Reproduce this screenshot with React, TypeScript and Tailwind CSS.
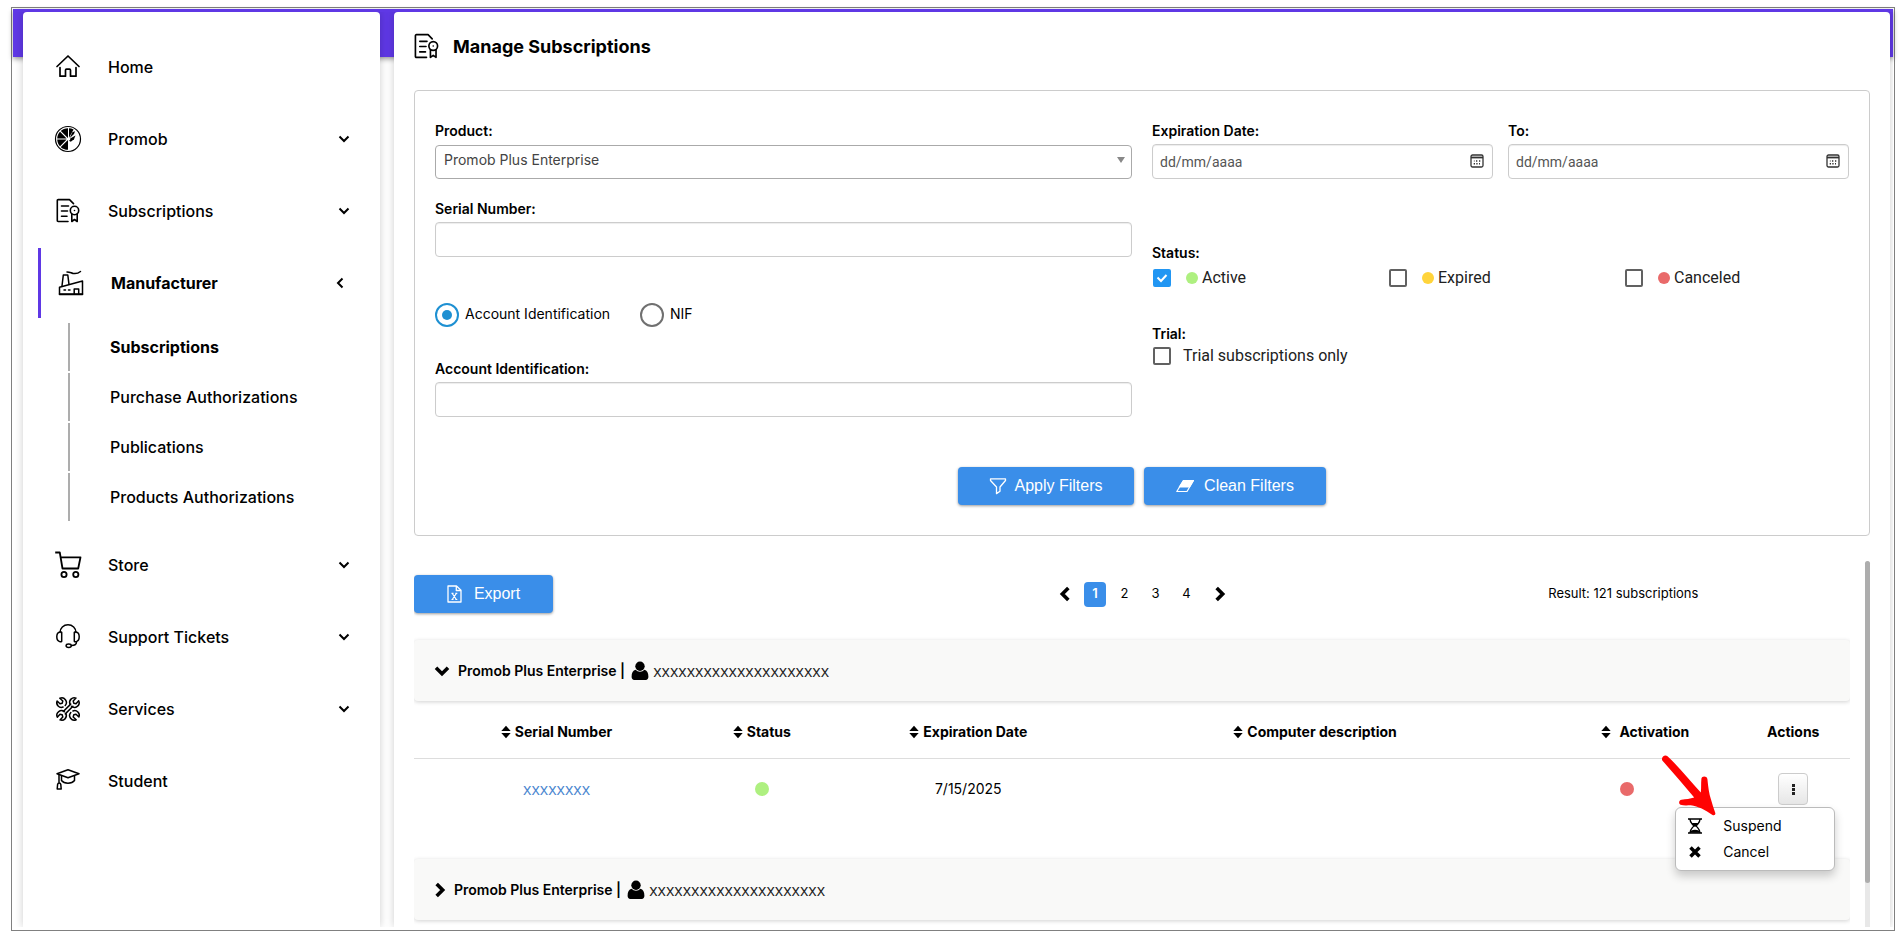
import React, { useState } from "react";

type IconProps = { className?: string };

function HomeIcon() {
  return (
    <svg viewBox="0 0 28 28" className="size-7" fill="none" stroke="currentColor" strokeWidth="1.7" strokeLinecap="round" strokeLinejoin="round">
      <path d="M3 13.500 14 3 25 13.500" />
      <path d="M6 14.500v8.700h5.500v-6a1 1 0 0 1 1-1h3a1 1 0 0 1 1 1v6H22v-8.700" />
    </svg>
  );
}

function WheelIcon() {
  return (
    <svg viewBox="0 0 28 28" className="size-7" fill="none" stroke="currentColor">
      <circle cx="14" cy="14" r="12.500" strokeWidth="1.2" />
      <path d="M14 3.200A10.800 10.800 0 0 0 14 24.800z" fill="currentColor" stroke="none" />
      <path d="M15 12.800V3.300a10.800 10.800 0 0 1 4.600 1.200z" fill="currentColor" stroke="none" />
      <path d="M15.600 13.200 18.300 7.300 21 6.200 20 9z" fill="currentColor" stroke="none" />
      <path d="M16.200 13.600 21.500 10.600 20 14.200l-3.200 2.600-2-1z" fill="currentColor" stroke="none" />
      <path d="M3 14h11M6.200 6.200 14 14M6.200 21.800 14 14" stroke="white" strokeWidth="1.100" />
      <circle cx="14.800" cy="14" r="1.500" fill="white" stroke="none" />
    </svg>
  );
}

function CertificateIcon({ className = "size-7" }: IconProps) {
  return (
    <svg viewBox="0 0 28 28" className={className} fill="none" stroke="currentColor" strokeWidth="1.6" strokeLinecap="round" strokeLinejoin="round">
      <path d="M14 24.500H4.200a.9.900 0 0 1-.9-.9V3.500a.9.900 0 0 1 .9-.9H15.500l4 4" />
      <path d="M7.500 9h7M7.500 14h6M7.500 19.200h5.500" />
      <circle cx="20.500" cy="13.500" r="4.200" />
      <circle cx="20.500" cy="13.500" r=".8" fill="currentColor" stroke="none" />
      <path d="M17.800 17v7.500l2.700-2 2.700 2V17" />
    </svg>
  );
}

function FactoryIcon() {
  return (
    <svg viewBox="0 0 28 28" className="size-7" fill="none" stroke="currentColor" strokeWidth="1.5" strokeLinecap="round" strokeLinejoin="round">
      <path d="M3.500 25.500V18.200L26.500 12v13.500z" />
      <path d="M6 17 7.300 6h4.500l1.200 9.300" />
      <path d="M11 3c3 0 4 1 6 1.400S22 4.600 24.500 2.500" />
      <path d="M18.200 25v-5h4.500v5" />
      <path d="M8 21h1.500M12.500 21H14" />
      <path d="M3.500 25h23" />
    </svg>
  );
}

function CartIcon() {
  return (
    <svg viewBox="0 0 28 28" className="size-7" fill="none" stroke="currentColor" strokeWidth="1.8" strokeLinejoin="round">
      <path d="M1.200 1.500h4.600L8.500 17.500h15.700L26.500 6.300H6.600" />
      <circle cx="10" cy="23.500" r="2.600" />
      <circle cx="21.800" cy="23.500" r="2.600" />
    </svg>
  );
}

function HeadsetIcon() {
  return (
    <svg viewBox="0 0 28 28" className="size-7" fill="none" stroke="currentColor" strokeWidth="1.5" strokeLinecap="round" strokeLinejoin="round">
      <path d="M6 9.500a8 7.800 0 0 1 16 0" />
      <path d="M7.700 9.300v9a2 2 0 0 1-2 .3c-1.500-.4-2.900-1.700-2.900-4.800s1.400-4.400 2.900-4.800a2 2 0 0 1 2 .3z" />
      <path d="M20.300 9.300v9a2 2 0 0 0 2 .3c1.500-.4 2.900-1.700 2.900-4.800s-1.400-4.400-2.900-4.800a2 2 0 0 0-2 .3z" />
      <path d="M22.500 19c0 2.500-1.500 3.500-5 3.500" />
      <ellipse cx="14.700" cy="22.700" rx="2.600" ry="1.700" />
    </svg>
  );
}

function ToolsIcon() {
  const head = "M11.200 10.500a4.600 4.600 0 0 0-5.400-7.200l3 2.700-.6 2.200-2.200.6-2.900-2.800a4.600 4.600 0 0 0 6 6";
  return (
    <svg viewBox="0 0 28 28" className="size-7" fill="none" stroke="currentColor" strokeWidth="1.5" strokeLinecap="round" strokeLinejoin="round">
      <path d={head} />
      <path d={head} transform="rotate(90 14 14)" />
      <path d={head} transform="rotate(180 14 14)" />
      <path d={head} transform="rotate(270 14 14)" />
      <path d="M9.300 16.500 16.700 9.100M11.300 18.900l7.600-7.600" />
    </svg>
  );
}

function GraduateIcon() {
  return (
    <svg viewBox="0 0 28 28" className="size-7" fill="none" stroke="currentColor" strokeWidth="1.5" strokeLinecap="round" strokeLinejoin="round">
      <path d="M14 2.800 25 6.800 14 10.800 3 6.800z" />
      <path d="M7.500 9v4.500c1.500 2 4 2.700 6.500 2.700s5-.7 6.500-2.700V9" />
      <path d="M5 8v8M3.200 22l.4-4.500c.2-1 .8-1.400 1.500-1.400s1.500.4 1.700 1.400l.4 4.500z" />
    </svg>
  );
}

function Chevron({ direction, className = "size-3", weight = 2 }: { direction: "down" | "left" | "right"; className?: string; weight?: number }) {
  const paths = { down: "M1.500 3.500 6 8l4.500-4.500", left: "M8.500 1.500 4 6l4.500 4.500", right: "M3.500 1.500 8 6l-4.500 4.500" };
  return (
    <svg viewBox="0 0 12 12" className={className} fill="none" stroke="currentColor" strokeWidth={weight}>
      <path d={paths[direction]} />
    </svg>
  );
}

function FunnelIcon() {
  return (
    <svg viewBox="0 0 18 18" className="size-[18px]" fill="none" stroke="currentColor" strokeWidth="1.300" strokeLinejoin="round">
      <path d="M1.500 1.800h15v1.700L11 10v4.300L7.500 16.600V10L1.500 3.500z" />
    </svg>
  );
}

function EraserIcon() {
  return (
    <svg viewBox="0 0 18 18" className="size-[18px]" fill="none" stroke="currentColor" strokeWidth="1.200" strokeLinejoin="round">
      <path d="M7.500 3.500h9.900L11 14.500H.8z" />
      <path d="M7.500 3.500h9.900L13.500 10H3.300z" fill="currentColor" />
    </svg>
  );
}

function SheetIcon() {
  return (
    <svg viewBox="0 0 15 18" className="h-[18px] w-[15px]" fill="none" stroke="currentColor" strokeWidth="1.300" strokeLinejoin="round">
      <path d="M1 1h8.500L14 5.200V17H1z" />
      <path d="M9.300 1v4.500H14" />
      <path d="M5.300 8.500l4 6M9.300 8.500l-4 6M4.500 8.300h2M8.300 8.300h2M4.500 14.500h2M8.300 14.500h2" strokeWidth="1.200" />
    </svg>
  );
}

function CalendarIcon() {
  return (
    <svg viewBox="0 0 14 14" className="size-3.5" fill="none" stroke="#333" strokeWidth="1.300">
      <rect x="1" y="1" width="12" height="12" rx="1.500" />
      <path d="M1 3.500h12" strokeWidth="1.800" />
      <path d="M6 7h1.300M9 7h1.300M3.700 9.700H5M6.300 9.700h1.300M3.900 7h.6M9 9.700h1" strokeWidth="1.500" />
    </svg>
  );
}

function UserIcon() {
  return (
    <svg viewBox="0 0 18 20" className="h-5 w-[18px]" fill="currentColor">
      <circle cx="9" cy="5.200" r="4.700" />
      <path d="M4.600 8.800C2 9.200.6 11.800.6 15.800c0 1.900 1 3.200 2.700 3.200h11.400c1.700 0 2.700-1.300 2.700-3.200 0-4-1.400-6.600-4-7a6 6 0 0 1-8.800 0z" />
    </svg>
  );
}

function SortIcon() {
  return (
    <svg viewBox="0 0 10 14" className="h-3.5 w-2.5" fill="currentColor">
      <path d="M5 .8 9.700 6H.3zM.3 8h9.400L5 13.200z" />
    </svg>
  );
}

function HourglassIcon() {
  return (
    <svg viewBox="0 0 14 16" className="h-4 w-3.5" fill="none" stroke="currentColor" strokeWidth="1.400">
      <path d="M0 1h14M0 15h14" />
      <path d="M2 1c0 4 2.500 5 3.700 7C4.500 10 2 11 2 15M12 1c0 4-2.500 5-3.700 7 1.200 2 3.700 3 3.700 7" />
      <path d="M3.500 5h7L7.700 8.500 7 9l-.7-.5zM2 14.800c.3-2 2-3 5-3s4.700 1 5 3z" fill="currentColor" stroke="none" />
    </svg>
  );
}

function CrossIcon() {
  return (
    <svg viewBox="0 0 12 12" className="size-3" fill="none" stroke="currentColor" strokeWidth="3.500">
      <path d="M1.500 1.500l9 9M10.500 1.500l-9 9" />
    </svg>
  );
}

const topItems = [
  { label: "Home", icon: <HomeIcon />, expandable: false },
  { label: "Promob", icon: <WheelIcon />, expandable: true },
  { label: "Subscriptions", icon: <CertificateIcon />, expandable: true },
];
const bottomItems = [
  { label: "Store", icon: <CartIcon />, expandable: true },
  { label: "Support Tickets", icon: <HeadsetIcon />, expandable: true },
  { label: "Services", icon: <ToolsIcon />, expandable: true },
  { label: "Student", icon: <GraduateIcon />, expandable: false },
];
const subItems = ["Subscriptions", "Purchase Authorizations", "Publications", "Products Authorizations"];

function NavItem({ label, icon, expandable }: { label: string; icon: React.ReactNode; expandable: boolean }) {
  return (
    <a href="#" className="flex h-[72px] items-center pr-[30px] pl-[31px] text-base font-medium">
      {icon}
      <span className="ml-[26px] flex-1">{label}</span>
      {expandable && <Chevron direction="down" />}
    </a>
  );
}

function Sidebar() {
  return (
    <nav className="w-[357px] shrink-0 rounded-t bg-white pt-[19px] shadow-[0_0_8px_rgba(0,0,0,0.2)]">
      {topItems.map((item) => (
        <NavItem key={item.label} {...item} />
      ))}
      <a href="#" className="mt-px ml-[15px] flex h-[70px] items-center border-l-3 border-[#5f38e5] pr-[34px] pl-[15px] text-base font-bold">
        <FactoryIcon />
        <span className="ml-[27px] flex-1">Manufacturer</span>
        <Chevron direction="left" />
      </a>
      <ul className="mt-[5px] mb-2 ml-[45px] flex flex-col gap-0.5">
        {subItems.map((item, index) => (
          <li key={item} className="flex h-12 items-center border-l-2 border-[#adadad] pl-10 text-base">
            <a href="#" className={index === 0 ? "font-bold" : "font-medium"}>{item}</a>
          </li>
        ))}
      </ul>
      {bottomItems.map((item) => (
        <NavItem key={item.label} {...item} />
      ))}
    </nav>
  );
}

const labelClass = "block text-sm leading-4 font-semibold";
const inputClass = "h-[35px] w-full rounded border border-[#ccc] bg-white px-[7px] shadow-[inset_0_1px_1px_rgba(0,0,0,0.075)]";
const buttonClass = "flex h-[38px] items-center justify-center rounded bg-[#3a8ee9] font-['Liberation_Sans',sans-serif] text-base text-white shadow-[0_1px_3px_rgba(0,0,0,0.4)]";

function DateField({ id, label }: { id: string; label: string }) {
  return (
    <div>
      <label htmlFor={id} className={labelClass}>{label}</label>
      <div className="relative mt-[5px]">
        <input id={id} type="text" placeholder="dd/mm/aaaa" className={`${inputClass} font-[Roboto,sans-serif] text-sm placeholder:text-[#555]`} />
        <button type="button" aria-label="Open calendar" className="absolute top-2.5 right-[9px]">
          <CalendarIcon />
        </button>
      </div>
    </div>
  );
}

function CheckOption({ label, dot, initial = false }: { label: string; dot?: string; initial?: boolean }) {
  const [checked, setChecked] = useState(initial);
  return (
    <label className="flex items-center font-[Roboto,sans-serif] text-base leading-5 text-[#212121]">
      <span className="grid size-[18px]">
        <input
          type="checkbox"
          checked={checked}
          onChange={() => setChecked(!checked)}
          className="col-start-1 row-start-1 size-[18px] appearance-none rounded-xs border-2 border-[#616161] bg-white checked:border-[#2196f3] checked:bg-[#2196f3]"
        />
        {checked && (
          <svg viewBox="0 0 18 18" className="pointer-events-none col-start-1 row-start-1 size-[18px]" fill="none" stroke="white" strokeWidth="2">
            <path d="M4.500 8.500 8 12l5.500-6" />
          </svg>
        )}
      </span>
      {dot && <span className={`mr-1 ml-[15px] size-3 rounded-full ${dot}`} />}
      <span className={dot ? "" : "ml-3"}>{label}</span>
    </label>
  );
}

function RadioOption({ label, selected, onSelect }: { label: string; selected: boolean; onSelect: () => void }) {
  return (
    <label className="flex items-start text-sm leading-[22px]">
      <span className="grid size-6 place-items-center">
        <input
          type="radio"
          name="identification"
          checked={selected}
          onChange={onSelect}
          className="col-start-1 row-start-1 size-6 appearance-none rounded-full border-2 border-[#707070] checked:border-[#1e90d2]"
        />
        {selected && <span className="pointer-events-none col-start-1 row-start-1 size-2.5 rounded-full bg-[#1e90d2]" />}
      </span>
      <span className="ml-1.5">{label}</span>
    </label>
  );
}

function FilterPanel() {
  const [mode, setMode] = useState("account");
  return (
    <form className="rounded border border-[#ccc] px-5 pt-8 pb-[30px]" onSubmit={(e) => e.preventDefault()}>
      <div className="grid grid-cols-2 gap-x-5">
        <div>
          <label htmlFor="product" className={labelClass}>Product:</label>
          <div className="relative mt-[6px]">
            <select id="product" className="h-[34px] w-full appearance-none rounded border border-[#aaa] bg-white px-2 pb-1 text-sm text-[#444]">
              <option>Promob Plus Enterprise</option>
            </select>
            <svg viewBox="0 0 8 6" className="pointer-events-none absolute top-3 right-[7px] h-1.5 w-2" fill="#888">
              <path d="M0 0h8L4 6z" />
            </svg>
          </div>
          <label htmlFor="serial" className={`${labelClass} mt-[22px]`}>Serial Number:</label>
          <input id="serial" className={`${inputClass} mt-[5px]`} />
          <div className="mt-[46px] flex gap-[30px]">
            <RadioOption label="Account Identification" selected={mode === "account"} onSelect={() => setMode("account")} />
            <RadioOption label="NIF" selected={mode === "nif"} onSelect={() => setMode("nif")} />
          </div>
          <label htmlFor="account" className={`${labelClass} mt-[34px]`}>Account Identification:</label>
          <input id="account" className={`${inputClass} mt-[5px]`} />
        </div>
        <div>
          <div className="grid grid-cols-2 gap-x-[15px]">
            <DateField id="date-from" label="Expiration Date:" />
            <DateField id="date-to" label="To:" />
          </div>
          <fieldset className="mt-[66px]">
            <legend className={labelClass}>Status:</legend>
            <div className="mt-[7px] -mr-3 grid grid-cols-3 pl-px">
              <CheckOption label="Active" dot="bg-[#aef080]" initial />
              <CheckOption label="Expired" dot="bg-[#ffd43b]" />
              <CheckOption label="Canceled" dot="bg-[#e96a6a]" />
            </div>
          </fieldset>
          <fieldset className="mt-[38px]">
            <legend className={labelClass}>Trial:</legend>
            <div className="mt-1 pl-px">
              <CheckOption label="Trial subscriptions only" />
            </div>
          </fieldset>
        </div>
      </div>
      <div className="mt-[50px] flex justify-center gap-2.5">
        <button type="submit" className={`${buttonClass} w-44 gap-[7px]`}>
          <FunnelIcon />
          Apply Filters
        </button>
        <button type="reset" className={`${buttonClass} w-[182px] gap-2.5`}>
          <EraserIcon />
          Clean Filters
        </button>
      </div>
    </form>
  );
}

function AccordionHeader({ open }: { open: boolean }) {
  return (
    <button type="button" aria-expanded={open} className="flex h-[61px] w-full items-center rounded bg-[#f9f9f8] pl-5 text-left text-sm font-semibold shadow-[0_1px_4px_rgba(0,0,0,0.18)]">
      {open ? <Chevron direction="down" className="mr-2 size-4" weight={2.7} /> : <Chevron direction="right" className="mr-1.5 -ml-0.5 size-4" weight={2.7} />}
      <span>Promob Plus Enterprise |</span>
      <span className="ml-1.5 mr-1">
        <UserIcon />
      </span>
      <span className="font-['Open_Sans',sans-serif] text-base font-normal text-[#222]">xxxxxxxxxxxxxxxxxxxxx</span>
    </button>
  );
}

const columns = [
  { label: "Serial Number", width: "w-[19.85%]", gap: "gap-1" },
  { label: "Status", width: "w-[8.75%]", gap: "gap-1" },
  { label: "Expiration Date", width: "w-[20%]", gap: "gap-1" },
  { label: "Computer description", width: "w-[28.3%]", gap: "gap-1" },
  { label: "Activation", width: "w-[15.2%]", gap: "gap-2 pl-9" },
];

function SubscriptionTable() {
  return (
    <table className="w-full table-fixed text-center text-sm">
      <thead>
        <tr className="h-[57px] border-b border-[#ddd]">
          {columns.map((column) => (
            <th key={column.label} className={`${column.width} pt-1.5 font-bold`}>
              <span className={`flex items-center justify-center ${column.gap}`}>
                <SortIcon />
                {column.label}
              </span>
            </th>
          ))}
          <th className="pt-1.5 font-bold">Actions</th>
        </tr>
      </thead>
      <tbody>
        <tr className="h-[62px]">
          <td><a href="#" className="font-['Open_Sans',sans-serif] text-base text-[#4a86cf]">xxxxxxxx</a></td>
          <td><span className="mx-auto block size-3.5 rounded-full bg-[#aef080]" /></td>
          <td>7/15/2025</td>
          <td />
          <td><span className="mx-auto block size-3.5 rounded-full bg-[#e96a6a]" /></td>
          <td>
            <div className="relative mx-auto w-[30px]">
              <button type="button" aria-label="Row actions" className="flex h-8 w-[30px] flex-col items-center justify-center gap-px rounded border border-[#ccc] bg-linear-to-b from-white to-[#e6e6e6]">
                <span className="size-[3px] bg-[#222]" />
                <span className="size-[3px] bg-[#222]" />
                <span className="size-[3px] bg-[#222]" />
              </button>
              <ul className="absolute top-[34px] -right-[27px] z-10 w-[160px] rounded-md border border-[#bbb] bg-white py-[5px] text-left shadow-[0_5px_10px_rgba(0,0,0,0.2)]">
                <li>
                  <button type="button" className="flex h-[26px] w-full items-center pl-[11px]"><span className="mr-5 flex w-4 justify-center"><HourglassIcon /></span>Suspend</button>
                </li>
                <li>
                  <button type="button" className="flex h-[26px] w-full items-center pl-[11px]"><span className="mr-5 flex w-4 justify-center"><CrossIcon /></span>Cancel</button>
                </li>
              </ul>
              <svg viewBox="0 0 56 62" className="pointer-events-none absolute -top-[18px] -left-[117px] z-20 h-[62px] w-14" fill="#ff0202">
                <path d="M1.300 5.500C-.2 2.500 3.500-.8 6.500 1.200 18 12 29 25.500 39.800 37.500c.6-4.500.1-8.500.6-13.800.5-3 5.300-2.700 6 .2.800 8 1.600 14.700 3.600 20.500 1.200 4.500 2.700 9 4.300 13.500.4 1.800-1 2.800-2.800 2C44.500 55.300 37 51 29.800 50.300c-3.500 0-7.300.4-10.300-.6-2.300-1.500-1.500-4.500 1-5 4.500-.6 8.500-1 12.700-2.300C22.500 30 12 17.500 1.300 5.500z" />
              </svg>
            </div>
          </td>
        </tr>
      </tbody>
    </table>
  );
}

function Results() {
  return (
    <section className="mt-[25px] flex min-h-0 flex-1">
      <div className="min-w-0 flex-1 overflow-hidden">
        <div className="mt-3.5 grid grid-cols-3 items-center pr-px">
          <button type="button" className={`${buttonClass} w-[139px] gap-3`}>
            <SheetIcon />
            Export
          </button>
          <div className="flex items-center justify-center pl-[22px] text-[13px]">
            <button type="button" aria-label="Previous page"><Chevron direction="left" className="size-4" weight={2.7} /></button>
            <button type="button" className="ml-[11px] h-[25px] w-[22px] rounded bg-[#3a8ee9] font-semibold text-white">1</button>
            <div className="mr-2.5 ml-[3px] flex">
              {["2", "3", "4"].map((page) => (
                <button key={page} type="button" className="h-[25px] w-[31px]">{page}</button>
              ))}
            </div>
            <button type="button" aria-label="Next page"><Chevron direction="right" className="size-4" weight={2.7} /></button>
          </div>
          <p className="pl-[27px] text-center text-[13px]">Result: 121 subscriptions</p>
        </div>
        <div className="mt-[27px]">
          <AccordionHeader open />
          <SubscriptionTable />
        </div>
        <div className="mt-[39px] pb-1.5">
          <AccordionHeader open={false} />
        </div>
      </div>
      <div className="ml-[15px] w-[5px] rounded-t bg-[#e8e8e8]">
        <div className="h-[88%] rounded bg-[#adadad]" />
      </div>
    </section>
  );
}

export default function App() {
  return (
    <div className="h-screen bg-white pt-[7px] pr-[5px] pb-3 pl-[11px] font-[Inter,sans-serif] text-black">
      <div className="flex h-full flex-col border border-[#808080] px-px pt-px pb-[3px]">
        <header className="h-12 shrink-0 bg-[#5f38e5] shadow-[0_2px_5px_rgba(0,0,0,0.4)]" />
        <div className="relative -mt-[45px] flex min-h-0 flex-1 gap-3.5 overflow-hidden pr-[3px] pl-2.5">
          <Sidebar />
          <main className="flex min-w-0 flex-1 flex-col rounded-t bg-white pr-5 pl-5 shadow-[0_0_8px_rgba(0,0,0,0.2)]">
            <h1 className="flex h-[78px] items-start gap-3 pt-5 text-lg leading-[30px] font-bold">
              <CertificateIcon className="-ml-0.5 size-[29px]" />
              <span>Manage Subscriptions</span>
            </h1>
            <FilterPanel />
            <Results />
          </main>
        </div>
      </div>
    </div>
  );
}
